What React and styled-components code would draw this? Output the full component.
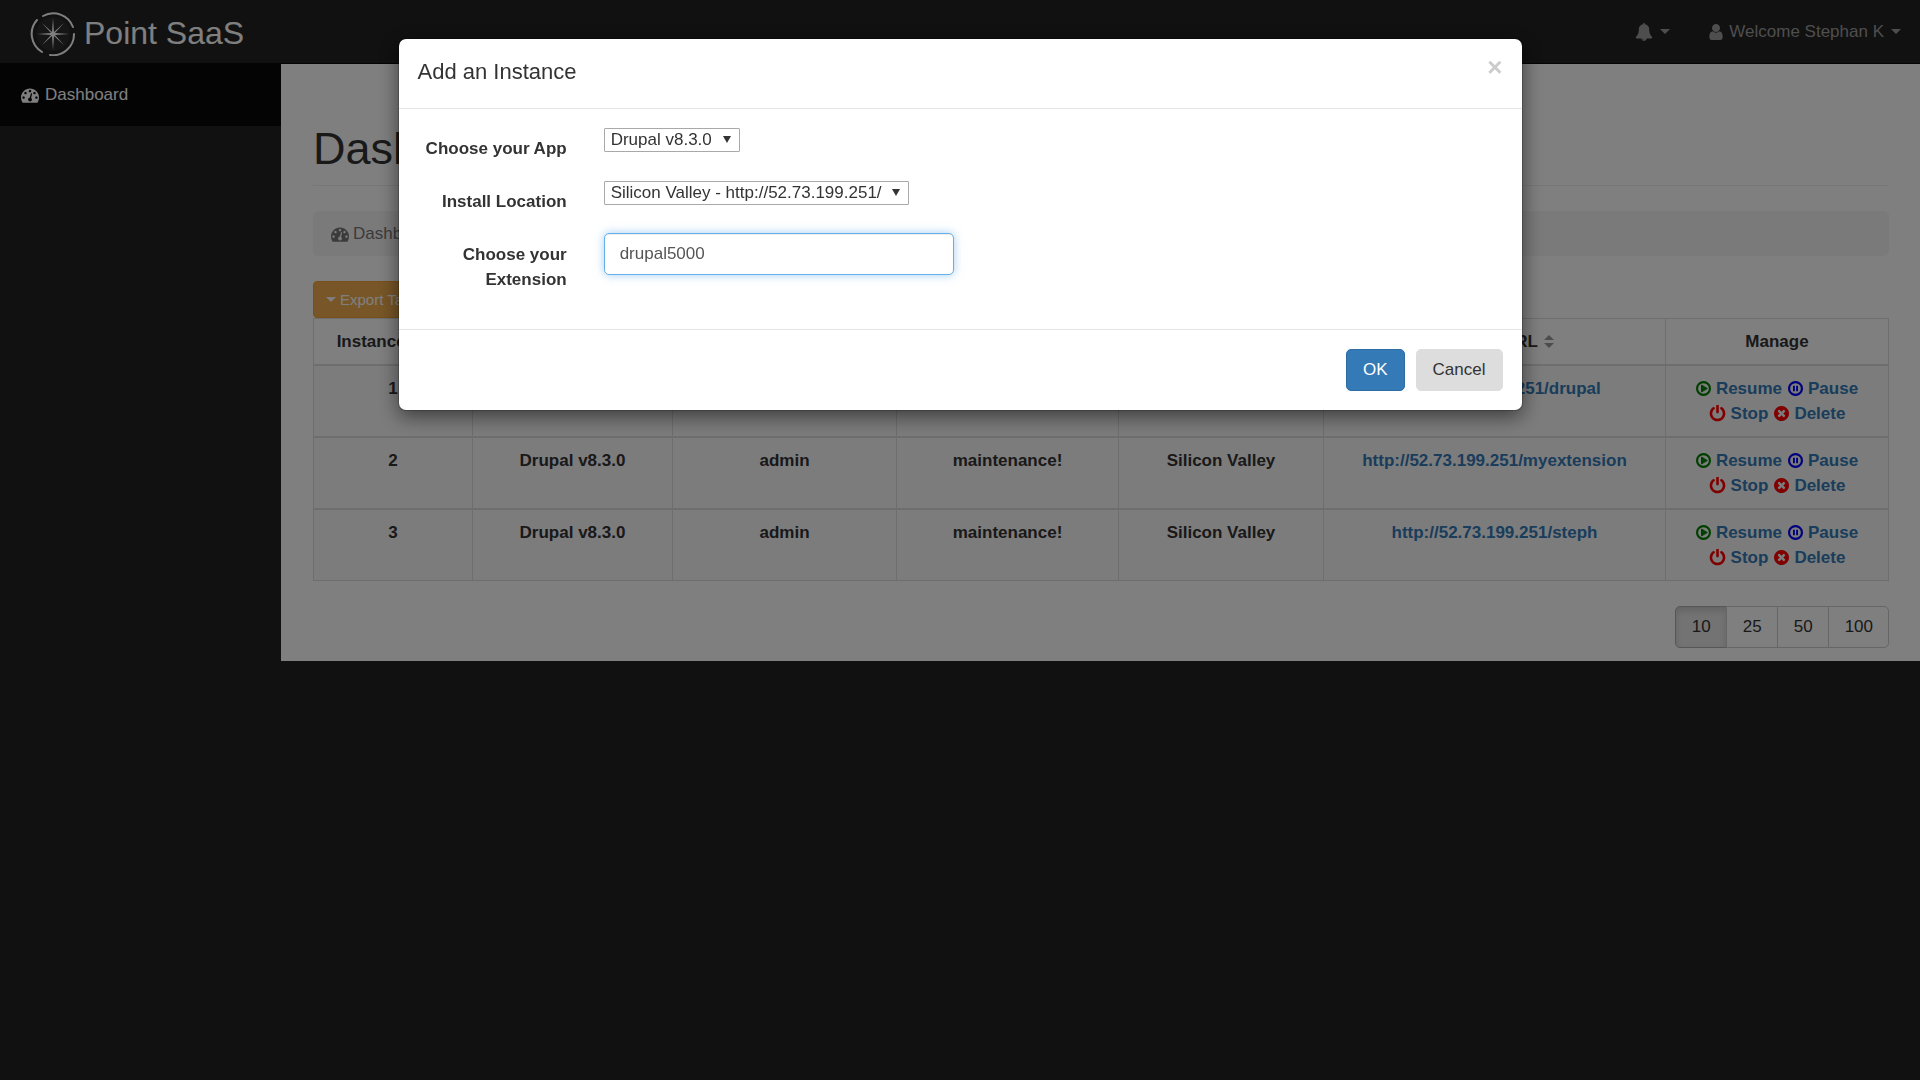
import React from 'react'
import styled, { createGlobalStyle } from 'styled-components'

const GlobalStyle = createGlobalStyle`
  *, *::before, *::after {
    box-sizing: border-box;
  }

  body {
    margin: 0;
    background: #222;
    color: #333;
    font-family: "Liberation Sans", Arial, sans-serif;
    font-size: 17px;
    line-height: 25px;
  }

  button, input, select {
    font-family: inherit;
    font-size: inherit;
    line-height: inherit;
  }
`

const Navbar = styled.nav`
  display: flex;
  justify-content: space-between;
  align-items: flex-start;
  height: 64px;
  border-bottom: 1px solid #080808;
`

const Brand = styled.a`
  display: flex;
  align-items: center;
  gap: 8px;
  padding: 10px 0 0 30px;
  color: #fff;
  font-size: 32px;
  line-height: 46px;
  text-decoration: none;
`

const BrandLogo = styled.svg`
  width: 46px;
  height: 46px;
`

const NavMenu = styled.div`
  display: flex;
`

const NavButton = styled.button`
  display: flex;
  align-items: center;
  gap: 5px;
  padding: 19px;
  border: 0;
  background: transparent;
  color: #9d9d9d;
`

const Caret = styled.span`
  margin-left: ${props => (props.$spaced ? '2px' : '0')};
  border-top: 5px solid currentColor;
  border-right: 5px solid transparent;
  border-left: 5px solid transparent;
`

const Glyph = styled.svg`
  flex: none;
  width: ${props => props.$size || 18}px;
  height: ${props => props.$size || 18}px;
  fill: ${props => props.$color || 'currentColor'};
`

const Layout = styled.div`
  display: grid;
  grid-template-columns: 281px 1fr;
  align-items: start;
`

const SideLink = styled.a`
  display: flex;
  align-items: center;
  gap: 6px;
  padding: 18px 21px 19px;
  background: #080808;
  color: #fff;
  text-decoration: none;
`

const Page = styled.main`
  padding: 60px 31px 13px 32px;
  background: #fff;
`

const PageTitle = styled.h1`
  margin: 0 0 25px;
  padding: 0 0 11px;
  border-bottom: 1px solid #eee;
  font-size: 45px;
  font-weight: normal;
  line-height: 50px;
`

const Breadcrumb = styled.div`
  display: flex;
  align-items: center;
  gap: 4px;
  margin-bottom: 25px;
  padding: 10px 18px;
  border-radius: 5px;
  background: #f5f5f5;
  color: #777;
`

const ExportButton = styled.button`
  display: flex;
  align-items: center;
  gap: 4px;
  padding: 6px 12px;
  border: 1px solid #eea236;
  border-radius: 4px;
  background: #f0ad4e;
  color: #fff;
  font-size: 15px;
  line-height: 23px;
`

const Table = styled.table`
  width: 100%;
  table-layout: fixed;
  border-collapse: collapse;
  border: 1px solid #ddd;
  text-align: center;

  th, td {
    padding: 10px;
    border: 1px solid #ddd;
    font-weight: bold;
    vertical-align: top;
  }

  tbody tr {
    border-top: 2px solid #ddd;
    background: #f9f9f9;
  }
`

const SortLabel = styled.span`
  display: inline-flex;
  align-items: center;
  gap: 6px;
  padding-right: 6px;
`

const SortArrows = styled.span`
  display: flex;
  flex-direction: column;
  gap: 3px;
  opacity: 0.4;

  &::before, &::after {
    content: '';
    border-right: 5px solid transparent;
    border-left: 5px solid transparent;
  }

  &::before {
    border-bottom: 5px solid #000;
  }

  &::after {
    border-top: 5px solid #000;
  }
`

const Link = styled.a`
  color: #337ab7;
  text-decoration: none;
`

const Actions = styled.div`
  display: flex;
  flex-wrap: wrap;
  justify-content: center;
  column-gap: 6px;
  padding: 0 15px;
`

const Action = styled(Link)`
  display: flex;
  align-items: center;
  gap: 5px;
`

const Pager = styled.div`
  display: flex;
  justify-content: flex-end;
  margin-top: 25px;
`

const PageSize = styled.button`
  margin-left: -1px;
  padding: 7px 15px 8px 16px;
  border: 1px solid ${props => (props.$active ? '#adadad' : '#ccc')};
  background: ${props => (props.$active ? '#e6e6e6' : '#fff')};
  box-shadow: ${props => (props.$active ? 'inset 0 4px 6px rgba(0, 0, 0, 0.125)' : 'none')};
  color: #333;

  &:first-child {
    border-radius: 5px 0 0 5px;
  }

  &:last-child {
    border-radius: 0 5px 5px 0;
  }
`

const Backdrop = styled.div`
  position: fixed;
  inset: 0;
  padding: 38px 20px;
  background: rgba(0, 0, 0, 0.5);
`

const Dialog = styled.div`
  max-width: 1125px;
  margin: 0 auto;
  border: 1px solid rgba(0, 0, 0, 0.2);
  border-radius: 8px;
  background: #fff;
  background-clip: padding-box;
  box-shadow: 0 6px 19px rgba(0, 0, 0, 0.5);
`

const DialogHeader = styled.header`
  display: flex;
  justify-content: space-between;
  align-items: flex-start;
  padding: 17px 19px 20px;
  border-bottom: 1px solid #e5e5e5;
`

const DialogTitle = styled.h4`
  margin: 0;
  font-size: 22px;
  font-weight: normal;
  line-height: 32px;
`

const CloseButton = styled.button`
  padding: 0;
  border: 0;
  background: transparent;
  color: #ccc;
  font-size: 26px;
  font-weight: bold;
  line-height: 22px;
`

const DialogBody = styled.div`
  display: grid;
  row-gap: 19px;
  padding: 18px 0 37px;
`

const FormGroup = styled.div`
  display: grid;
  grid-template-columns: 1fr 5fr;
  align-items: start;
`

const Label = styled.label`
  padding: 9px 19px 0;
  font-weight: bold;
  text-align: right;
`

const Field = styled.div`
  padding: 0 18px;
`

const SelectBox = styled.div`
  display: inline-block;
  position: relative;
  height: 24px;
  vertical-align: top;

  &::after {
    content: '';
    position: absolute;
    top: 9px;
    right: 9px;
    border-top: 7px solid #333;
    border-right: 4px solid transparent;
    border-left: 4px solid transparent;
    pointer-events: none;
  }
`

const Select = styled.select`
  appearance: none;
  height: 24px;
  padding: 0 26px 0 6px;
  border: 1px solid #a9a9a9;
  border-radius: 1px;
  background: #fff;
  color: #333;
  line-height: 22px;
`

const TextInput = styled.input`
  display: block;
  width: 350px;
  max-width: 100%;
  height: 42px;
  padding: 7px 15px;
  border: 1px solid #66afe9;
  border-radius: 5px;
  outline: 0;
  color: #555;
  box-shadow: inset 0 1px 1px rgba(0, 0, 0, 0.075), 0 0 10px rgba(102, 175, 233, 0.6);
`

const DialogFooter = styled.footer`
  display: flex;
  justify-content: flex-end;
  gap: 11px;
  padding: 19px;
  border-top: 1px solid #e5e5e5;
`

const DialogButton = styled.button`
  padding: 7px 16px 8px;
  border: 1px solid ${props => (props.$primary ? '#2e6da4' : '#ddd')};
  border-radius: 5px;
  background: ${props => (props.$primary ? '#337ab7' : '#ddd')};
  color: ${props => (props.$primary ? '#fff' : '#333')};
`

const Logo = () => (
  <BrandLogo viewBox="-23 -24 46 46">
    <circle r="17" fill="#2c2c2c" />
    <g fill="none" stroke="#fff" strokeWidth="2" strokeLinecap="round">
      <path d="M-10-18A21 21 0 0 1 20-7" />
      <path d="M21 0A21 21 0 0 1-3 21" />
      <path d="M-11 18A21 21 0 0 1-16-14" />
    </g>
    <path
      fill="#fff"
      d="M0-16L1-2 11-11 2-1 16 0 2 1 11 11 1 2 0 16-1 2-11 11-2 1-16 0-2-1-11-11-1-2z"
    />
  </BrandLogo>
)

const DashboardIcon = () => (
  <Glyph viewBox="0 0 1792 1792">
    <path d="M384 1152q0-53-37.500-90.500t-90.500-37.500-90.500 37.500-37.500 90.500 37.500 90.500 90.500 37.500 90.500-37.500 37.500-90.500zm192-448q0-53-37.500-90.500t-90.500-37.500-90.500 37.500-37.500 90.500 37.500 90.500 90.500 37.500 90.500-37.500 37.500-90.500zm428 481l101-382q6-26-7.500-48.500t-38.500-29.500-48 6.500-30 39.500l-101 382q-60 5-107 43.500t-63 98.500q-20 77 20 146t117 89 146-20 89-117q16-60-6-117t-72-91zm660-33q0-53-37.500-90.500t-90.500-37.500-90.500 37.500-37.500 90.500 37.500 90.500 90.500 37.500 90.500-37.500 37.500-90.500zm-640-640q0-53-37.500-90.500t-90.500-37.500-90.500 37.500-37.500 90.500 37.500 90.500 90.500 37.500 90.500-37.500 37.500-90.500zm448 192q0-53-37.500-90.500t-90.500-37.500-90.500 37.500-37.500 90.500 37.500 90.500 90.500 37.500 90.500-37.500 37.500-90.500zm320 448q0 261-141 483-19 29-54 29h-1402q-35 0-54-29-141-221-141-483 0-182 71-348t191-286 286-191 348-71 348 71 286 191 191 286 71 348z" />
  </Glyph>
)

const BellIcon = () => (
  <Glyph viewBox="0 0 1792 1792">
    <path d="M912 1696q0-16-16-16-59 0-101.500-42.500t-42.500-101.500q0-16-16-16t-16 16q0 73 51.500 124.500t124.500 51.500q16 0 16-16zm816-288q0 52-38 90t-90 38h-448q0 106-75 181t-181 75-181-75-75-181h-448q-52 0-90-38t-38-90q50-42 91-88t85-119.500 74.500-158.500 50-206 19.500-260q0-152 117-282.500t307-158.500q-8-19-8-39 0-40 28-68t68-28 68 28 28 68q0 20-8 39 190 28 307 158.500t117 282.500q0 139 19.500 260t50 206 74.500 158.500 85 119.500 91 88z" />
  </Glyph>
)

const UserIcon = () => (
  <Glyph $size={16} viewBox="128 128 1536 1536">
    <path d="M1536 1399q0 109-62.500 187t-150.500 78h-854q-88 0-150.500-78t-62.500-187q0-85 8.500-160.500t31.500-152 58.500-131 94-89 134.500-34.500q131 128 313 128t313-128q76 0 134.500 34.500t94 89 58.500 131 31.500 152 8.500 160.500zm-256-887q0 159-112.500 271.500t-271.500 112.500-271.500-112.500-112.500-271.500 112.500-271.500 271.500-112.500 271.500 112.500 112.500 271.500z" />
  </Glyph>
)

const ResumeIcon = () => (
  <Glyph $size={15} $color="green" viewBox="0 128 1536 1536">
    <path d="M1184 896q0 37-32 55l-544 320q-15 9-32 9-16 0-32-8-32-19-32-56v-640q0-37 32-56 33-18 64 1l544 320q32 18 32 55zm128 0q0-148-73-273t-198-198-273-73-273 73-198 198-73 273 73 273 198 198 273 73 273-73 198-198 73-273zm224 0q0 209-103 385.500t-279.500 279.500-385.500 103-385.500-103-279.500-279.500-103-385.500 103-385.500 279.500-279.500 385.500-103 385.500 103 279.500 279.500 103 385.500z" />
  </Glyph>
)

const PauseIcon = () => (
  <Glyph $size={15} $color="blue" viewBox="0 128 1536 1536">
    <path d="M512 608h192v576h-192zM832 608h192v576h-192zM1312 896q0-148-73-273t-198-198-273-73-273 73-198 198-73 273 73 273 198 198 273 73 273-73 198-198 73-273zm224 0q0 209-103 385.500t-279.500 279.500-385.500 103-385.500-103-279.500-279.500-103-385.500 103-385.500 279.500-279.500 385.500-103 385.500 103 279.500 279.500 103 385.500z" fillRule="evenodd" />
  </Glyph>
)

const StopIcon = () => (
  <Glyph $size={17} $color="red" viewBox="64 64 1664 1664">
    <path d="M1664 896q0 156-61 298t-164 245-245 164-298 61-298-61-245-164-164-245-61-298q0-182 80.500-343t226.500-270q43-32 95.500-25t83.500 50q32 42 24.500 94.500t-49.500 84.500q-98 74-151.500 181t-53.500 228q0 104 40.500 198.500t109.500 163.500 163.500 109.500 198.500 40.500 198.500-40.500 163.500-109.500 109.500-163.500 40.500-198.500q0-121-53.500-228t-151.500-181q-42-32-49.500-84.500t24.500-94.500q31-43 84-50t95 25q146 109 226.500 270t80.500 343zm-640-768v640q0 52-38 90t-90 38-90-38-38-90v-640q0-52 38-90t90-38 90 38 38 90z" />
  </Glyph>
)

const DeleteIcon = () => (
  <Glyph $size={15} $color="red" viewBox="128 128 1536 1536">
    <path d="M1277 1122q0-26-19-45l-181-181 181-181q19-19 19-45 0-27-19-46l-90-90q-19-19-46-19-26 0-45 19l-181 181-181-181q-19-19-45-19-27 0-46 19l-90 90q-19 19-19 46 0 26 19 45l181 181-181 181q-19 19-19 45 0 27 19 46l90 90q19 19 46 19 26 0 45-19l181-181 181 181q19 19 45 19 27 0 46-19l90-90q19-19 19-46zm387-226q0 209-103 385.500t-279.500 279.500-385.500 103-385.500-103-279.500-279.500-103-385.500 103-385.500 279.500-279.500 385.500-103 385.500 103 279.500 279.500 103 385.500z" />
  </Glyph>
)

// fixed table layout shares these out over the full width
const columns = [
  { title: 'Instance ID', width: 159 },
  { title: 'App', width: 200 },
  { title: 'Username', width: 224 },
  { title: 'Password', width: 222 },
  { title: 'Location', width: 205 },
  { title: 'Instance URL', width: 342 },
]

const instances = [
  { id: 1, path: 'drupal' },
  { id: 2, path: 'myextension' },
  { id: 3, path: 'steph' },
].map(instance => ({
  ...instance,
  app: 'Drupal v8.3.0',
  username: 'admin',
  password: 'maintenance!',
  location: 'Silicon Valley',
  url: `http://52.73.199.251/${instance.path}`,
}))

const InstanceTable = () => (
  <Table>
    <colgroup>
      { columns.map(col => <col key={col.title} width={col.width} />) }
      <col width={223} />
    </colgroup>
    <thead>
      <tr>
        { columns.map(col => (
          <th key={col.title}>
            <SortLabel>{ col.title }<SortArrows /></SortLabel>
          </th>
        ))}
        <th>Manage</th>
      </tr>
    </thead>
    <tbody>
      { instances.map(instance => (
        <tr key={instance.id}>
          <td>{ instance.id }</td>
          <td>{ instance.app }</td>
          <td>{ instance.username }</td>
          <td>{ instance.password }</td>
          <td>{ instance.location }</td>
          <td><Link href={instance.url}>{ instance.url }</Link></td>
          <td>
            <Actions>
              <Action href="#resume"><ResumeIcon />Resume</Action>
              <Action href="#pause"><PauseIcon />Pause</Action>
              <Action href="#stop"><StopIcon />Stop</Action>
              <Action href="#delete"><DeleteIcon />Delete</Action>
            </Actions>
          </td>
        </tr>
      ))}
    </tbody>
  </Table>
)

const AddInstanceDialog = () => {
  const [extension, setExtension] = React.useState('drupal5000')

  return (
    <Backdrop>
      <Dialog role="dialog" aria-labelledby="dialog-title">
        <DialogHeader>
          <DialogTitle id="dialog-title">Add an Instance</DialogTitle>
          <CloseButton aria-label="Close">×</CloseButton>
        </DialogHeader>
        <DialogBody>
          <FormGroup>
            <Label htmlFor="app">Choose your App</Label>
            <Field>
              <SelectBox>
                <Select id="app">
                  <option>Drupal v8.3.0</option>
                </Select>
              </SelectBox>
            </Field>
          </FormGroup>
          <FormGroup>
            <Label htmlFor="location">Install Location</Label>
            <Field>
              <SelectBox>
                <Select id="location">
                  <option>Silicon Valley - http://52.73.199.251/</option>
                </Select>
              </SelectBox>
            </Field>
          </FormGroup>
          <FormGroup>
            <Label htmlFor="extension">Choose your Extension</Label>
            <Field>
              <TextInput
                id="extension"
                type="text"
                value={extension}
                onChange={e => setExtension(e.target.value)}
              />
            </Field>
          </FormGroup>
        </DialogBody>
        <DialogFooter>
          <DialogButton $primary>OK</DialogButton>
          <DialogButton>Cancel</DialogButton>
        </DialogFooter>
      </Dialog>
    </Backdrop>
  )
}

const App = () => (
  <>
    <GlobalStyle />
    <Navbar>
      <Brand href="#home"><Logo />Point SaaS</Brand>
      <NavMenu>
        <NavButton aria-label="Alerts"><BellIcon /><Caret $spaced /></NavButton>
        <NavButton><UserIcon />Welcome Stephan K<Caret $spaced /></NavButton>
      </NavMenu>
    </Navbar>
    <Layout>
      <SideLink href="#dashboard"><DashboardIcon />Dashboard</SideLink>
      <Page>
        <PageTitle>Dashboard</PageTitle>
        <Breadcrumb><DashboardIcon />Dashboard</Breadcrumb>
        <ExportButton><Caret />Export Table</ExportButton>
        <InstanceTable />
        <Pager>
          { [10, 25, 50, 100].map(size => (
            <PageSize key={size} $active={size === 10}>{ size }</PageSize>
          ))}
        </Pager>
      </Page>
    </Layout>
    <AddInstanceDialog />
  </>
)

export default App
